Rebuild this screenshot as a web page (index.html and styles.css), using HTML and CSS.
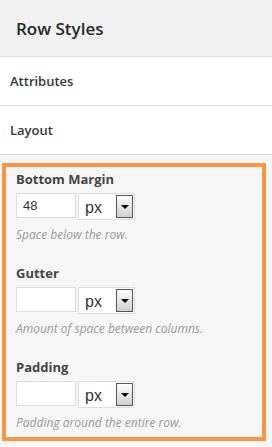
FILE: index.html
```html
<!DOCTYPE html>
<html>
<head>
<meta charset="utf-8">
<link rel="stylesheet" href="styles.css">
</head>
<body>
<div class="panel">
  <div class="header"><h2 class="title">Row Styles</h2></div>
  <div class="row">Attributes</div>
  <div class="row">Layout</div>
  <div class="section">
    <div class="box">
      <div class="group">
        <div class="label">Bottom Margin</div>
        <div class="controls">
          <div class="input">48</div>
          <div class="select"><span class="unit">px</span><span class="btn"><span class="tri"></span></span></div>
        </div>
        <div class="desc">Space below the row.</div>
      </div>
      <div class="group">
        <div class="label">Gutter</div>
        <div class="controls">
          <div class="input"></div>
          <div class="select"><span class="unit">px</span><span class="btn"><span class="tri"></span></span></div>
        </div>
        <div class="desc">Amount of space between columns.</div>
      </div>
      <div class="group">
        <div class="label">Padding</div>
        <div class="controls">
          <div class="input"></div>
          <div class="select"><span class="unit">px</span><span class="btn"><span class="tri"></span></span></div>
        </div>
        <div class="desc">Padding around the entire row.</div>
      </div>
    </div>
  </div>
</div>
</body>
</html>
```

FILE: styles.css
```css
html, body {
  margin: 0;
  padding: 0;
  background: #f6f6f6;
  font-family: "Open Sans", "Liberation Sans", sans-serif;
  color: #32373c;
}
.panel {
  width: 272px;
  height: 447px;
  background: #f6f6f6;
}
.header {
  height: 56px;
  background: #f1f1f1;
  border-bottom: 1px solid #dddddd;
  display: flex;
  align-items: center;
  padding-left: 16px;
}
.title {
  margin: 0;
  font-size: 17px;
  font-weight: 600;
  color: #23282d;
  line-height: 20px;
  position: relative;
  top: 1px;
}
.row {
  height: 48px;
  background: #ffffff;
  border-bottom: 1px solid #dddddd;
  display: flex;
  align-items: center;
  padding-left: 10px;
  font-size: 13px;
  font-weight: 600;
  color: #32373c;
}
.section {
  padding: 8px 6px 6px 2px;
}
.box {
  border: 4px solid #f79646;
  background: #f6f6f6;
  padding: 3px 10px 4px 10px;
  box-sizing: border-box;
  height: 278px;
}
.group + .group {
  margin-top: 20px;
}
.label {
  font-size: 13px;
  font-weight: 700;
  line-height: 18px;
  color: #444;
}
.controls {
  display: flex;
  gap: 2px;
  margin-top: 5px;
  align-items: flex-start;
}
.input {
  width: 60px;
  height: 25px;
  box-sizing: border-box;
  border: 1px solid #dddddd;
  background: #fff;
  font-family: "Liberation Sans", Arial, sans-serif;
  font-size: 13px;
  color: #333;
  padding: 4px 0 0 6px;
  line-height: 15px;
}
.select {
  width: 57px;
  height: 27px;
  box-sizing: border-box;
  border: 1px solid #dddddd;
  background: #fff;
  display: flex;
  align-items: stretch;
  padding: 1px 1px 1px 0;
}
.unit {
  flex: 1;
  font-family: "Liberation Sans", Arial, sans-serif;
  font-size: 16px;
  color: #333;
  padding-left: 6px;
  line-height: 25px;
}
.btn {
  width: 17px;
  box-sizing: border-box;
  border: 1px solid #555;
  background: linear-gradient(#fdfdfd, #cfcfcf);
  display: flex;
  align-items: center;
  justify-content: center;
}
.tri {
  width: 0;
  height: 0;
  border-left: 4px solid transparent;
  border-right: 4px solid transparent;
  border-top: 4px solid #000;
}
.desc {
  margin-top: 6px;
  font-size: 12px;
  font-style: italic;
  line-height: 18px;
  color: #999;
}
```
